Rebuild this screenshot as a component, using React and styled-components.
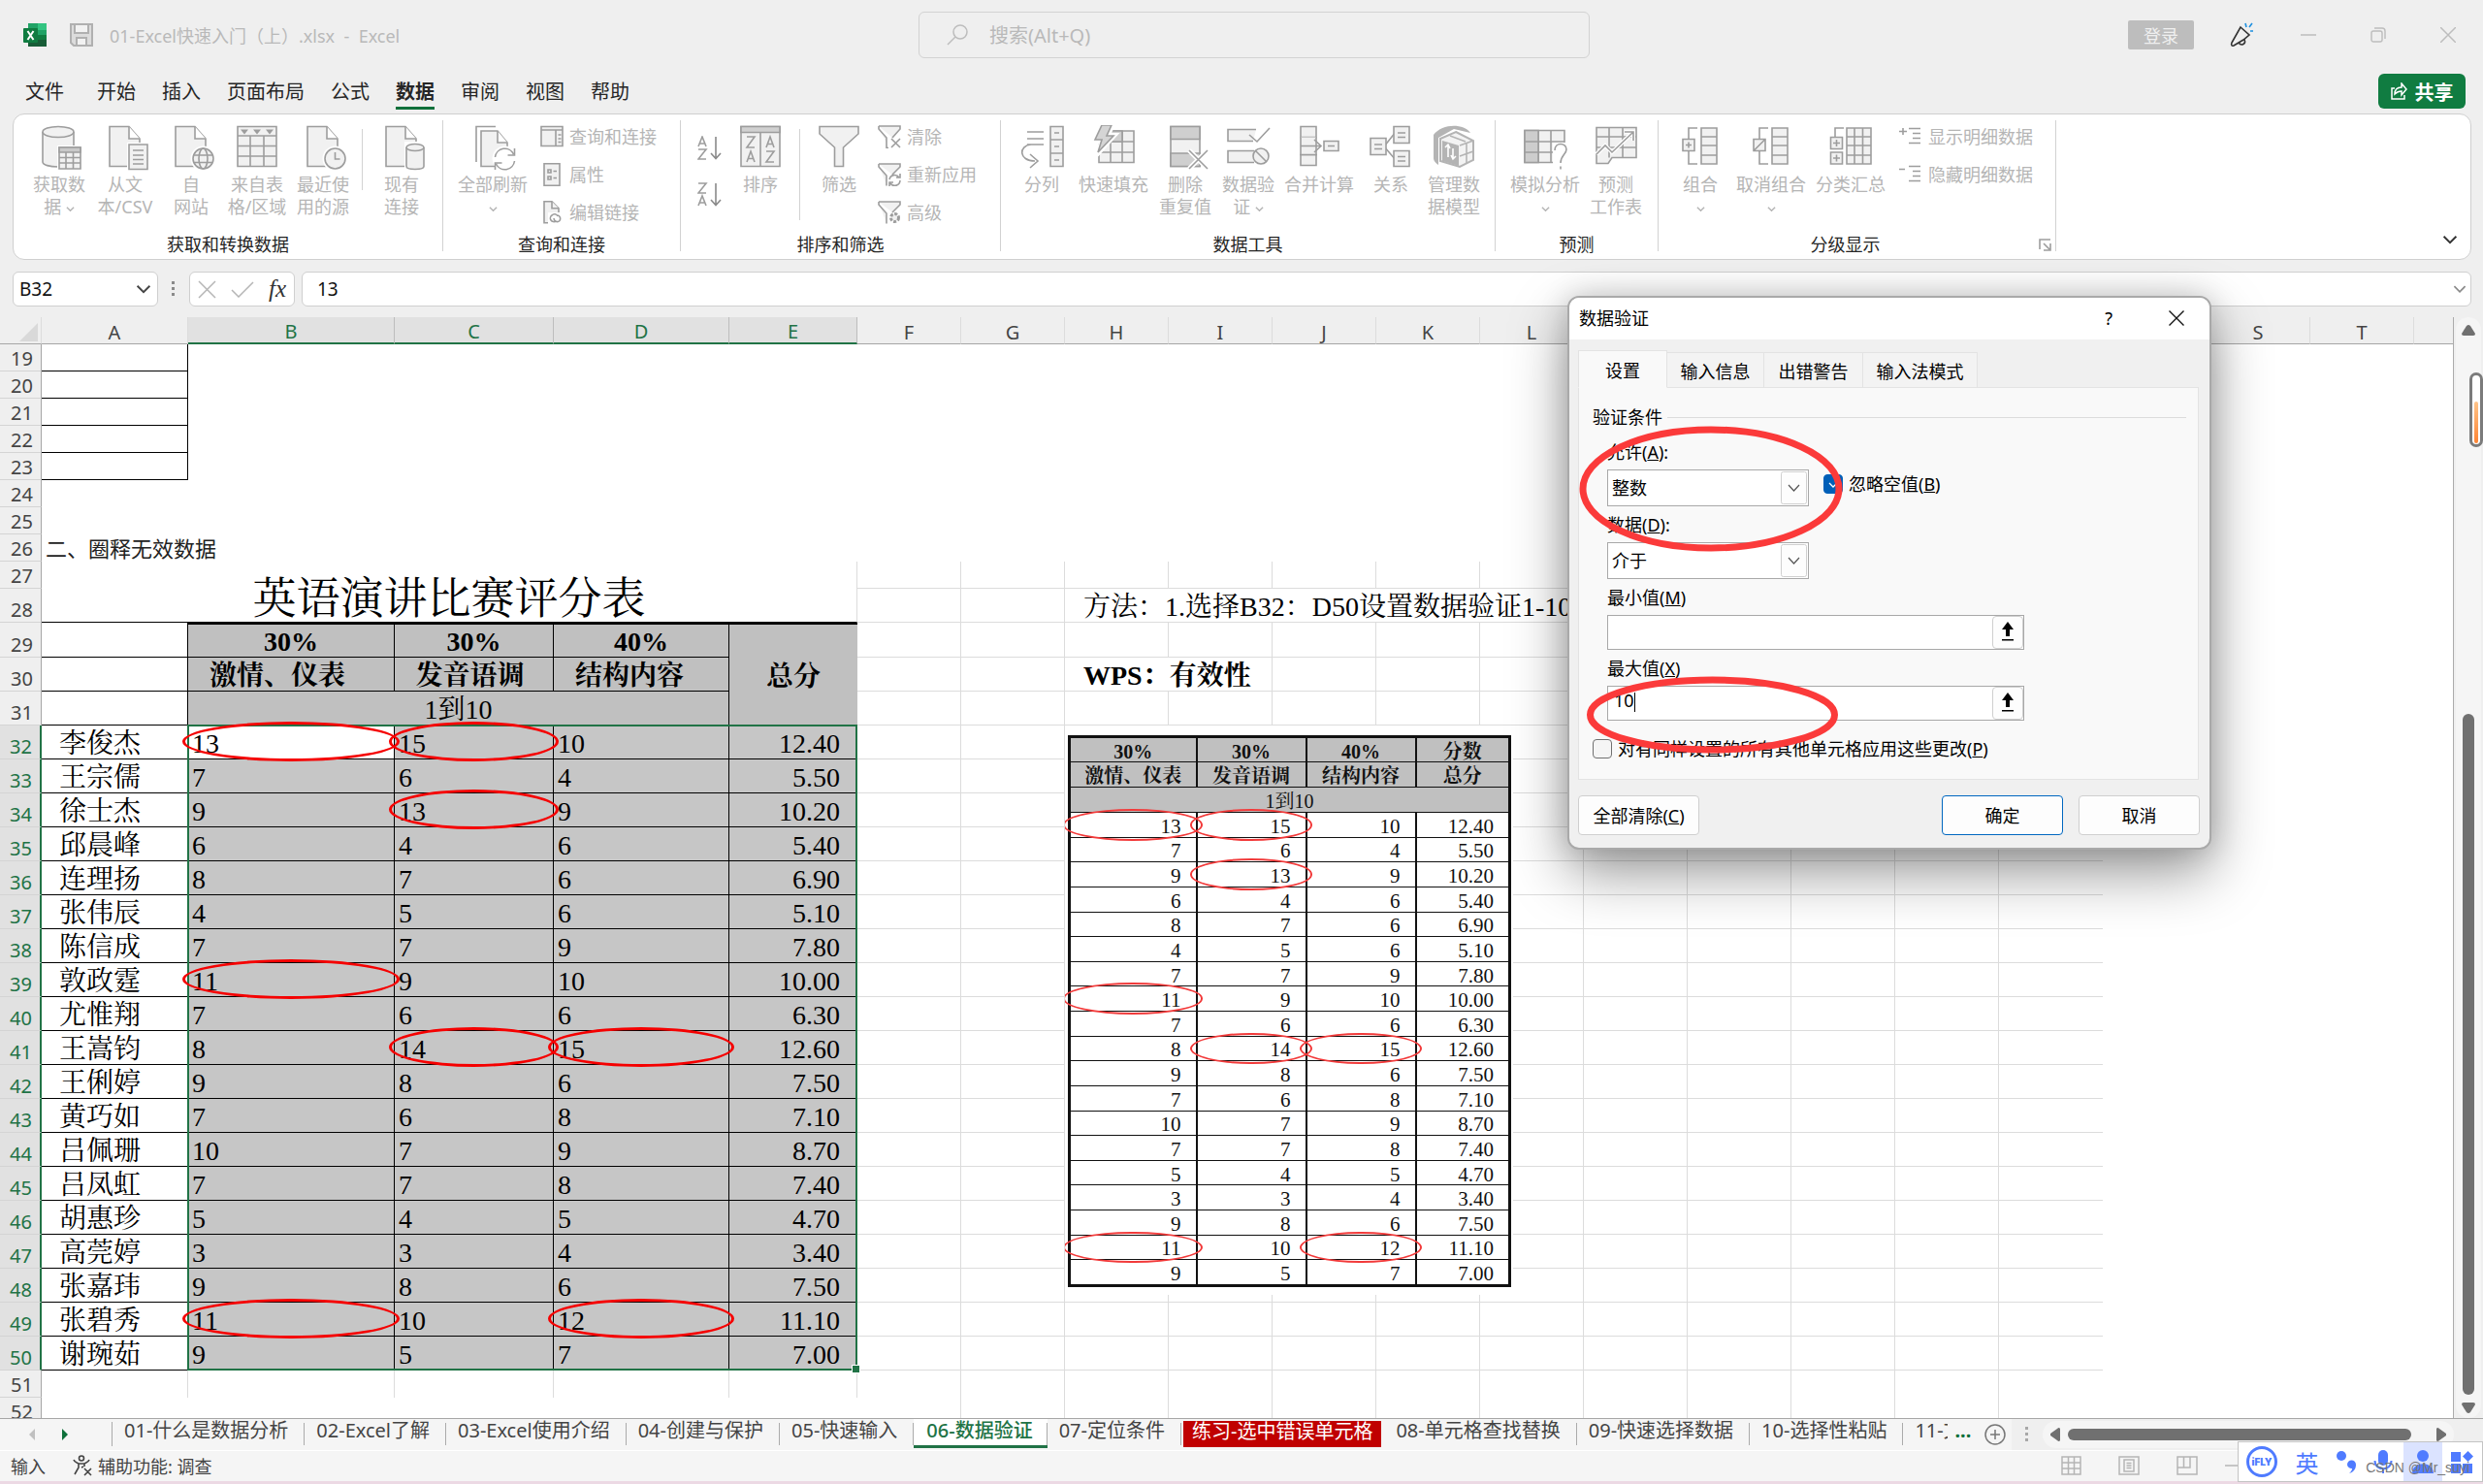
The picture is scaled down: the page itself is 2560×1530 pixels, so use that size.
import React from "react";
import styled, { createGlobalStyle, css } from "styled-components";

const UI = `"Noto Sans", "Noto Sans CJK SC", sans-serif`;
const SONG = `"Liberation Serif", "Noto Serif CJK SC", "Noto Sans CJK SC", serif`;

const Global = createGlobalStyle`
  * { box-sizing: border-box; }
  body { margin: 0; font-family: ${UI}; background: #efefef; }
  button, input, select { font-family: inherit; font-size: inherit; color: inherit; margin: 0; }
  button { background: none; border: 0; padding: 0; }
  svg { display: block; flex: none; }
`;

const App_ = styled.div`
  position: relative;
  display: flex;
  flex-direction: column;
  height: 100vh;
  overflow: hidden;
  background: #efefef;
  color: #262626;
`;

/* ---------- title bar ---------- */
const TitleBar = styled.header`
  display: grid;
  grid-template-columns: minmax(0, 923fr) 692px minmax(0, 893fr);
  align-items: center;
  height: 72px;
  padding: 0 28px 0 24px;
  color: #b9b9b9;
  font-size: 18px;
`;
const TitleLeft = styled.div`
  display: flex;
  align-items: center;
  gap: 24px;
`;
const FileName = styled.span`
  margin-left: -7px;
  white-space: pre;
`;
const Search = styled.label`
  display: flex;
  align-items: center;
  gap: 20px;
  height: 48px;
  padding: 0 28px;
  border: 1px solid #d2d2d2;
  border-radius: 6px;
  input {
    flex: 1;
    border: 0;
    background: none;
    outline: 0;
    font-size: 20px;
    &::placeholder { color: #b9b9b9; opacity: 1; }
  }
`;
const TitleRight = styled.div`
  display: flex;
  align-items: center;
  justify-content: flex-end;
  gap: 48px;
`;
const Login = styled.button`
  width: 68px;
  height: 30px;
  margin-right: -12px;
  border-radius: 2px;
  background: #bdbdbd;
  color: #efefef;
`;
const WinButtons = styled.div`
  display: flex;
  gap: 56px;
`;
const WinButton = styled.button`
  width: 16px;
  height: 24px;
  display: grid;
  place-items: center;
`;

/* ---------- menu ---------- */
const MenuBar = styled.nav`
  display: flex;
  align-items: center;
  justify-content: space-between;
  height: 44px;
  padding: 0 18px 0 26px;
  font-size: 20px;
`;
const MenuList = styled.div`
  display: flex;
  gap: 27px;
`;
const MenuItem = styled.button`
  height: 38px;
  padding-top: 4px;
  line-height: 31px;
  color: #262626;
  font-weight: ${(p) => (p.$on ? 700 : 400)};
  border-bottom: 3px solid ${(p) => (p.$on ? "#0f703b" : "transparent")};
  &:first-child { margin-right: 7px; }
`;
const Share = styled.button`
  display: flex;
  align-items: center;
  justify-content: center;
  gap: 8px;
  width: 90px;
  height: 36px;
  border-radius: 6px;
  background: #107c41;
  color: #fff;
  font-weight: 700;
`;

/* ---------- ribbon ---------- */
const Ribbon = styled.section`
  display: flex;
  height: 151px;
  margin: 1px 12px 0 13px;
  border: 1px solid #cfcfcf;
  border-radius: 12px;
  background: #fff;
`;
const Group = styled.div`
  position: relative;
  display: flex;
  flex-direction: column;
  margin: 6px 0 8px;
  width: ${(p) => p.$w}px;
  border-right: 1px solid #d2d2d2;
`;
const GroupBody = styled.div`
  display: flex;
  flex: 1 1 0;
  min-height: 0;
  padding-left: ${(p) => p.$pad}px;
  gap: ${(p) => p.$gap || 0}px;
`;
const GroupName = styled.div`
  height: 22px;
  margin-bottom: -4px;
  line-height: 22px;
  text-align: center;
  font-size: 18px;
  padding-right: ${(p) => p.$end || 0}px;
`;
const Big = styled.button`
  display: flex;
  flex-direction: column;
  align-items: center;
  gap: 2px;
  width: ${(p) => p.$w}px;
  height: 106px;
  padding-top: 5px;
  color: #b5b5b5;
  font-size: 18px;
  line-height: 23px;
  white-space: nowrap;
`;
const Rule = styled.span`
  width: 1px;
  height: ${(p) => p.$h}px;
  margin: 9px ${(p) => p.$m || 0}px 0;
  background: #d2d2d2;
`;
const SmallList = styled.div`
  display: flex;
  flex-direction: column;
  padding-left: ${(p) => p.$pad || 0}px;
`;
const Small = styled.button`
  display: flex;
  flex: none;
  align-items: center;
  gap: 6px;
  height: 39px;
  margin-top: ${(p) => p.$mt || 0}px;
  color: #b5b5b5;
  font-size: 18px;
  line-height: 24px;
  white-space: nowrap;
`;
const SortList = styled.div`
  display: flex;
  flex-direction: column;
  gap: 23px;
  padding-top: 16px;
`;
const Launcher = styled.button`
  position: absolute;
  right: 4px;
  bottom: 0;
`;
const Collapse = styled.button`
  align-self: flex-end;
  margin: 0 13px 7px auto;
`;

/* ---------- formula bar ---------- */
const FormulaBar = styled.section`
  display: flex;
  align-items: center;
  height: 36px;
  margin: 12px 12px 11px 13px;
  font-size: 19px;
`;
const BarBox = styled.div`
  display: flex;
  align-items: center;
  justify-content: space-between;
  width: ${(p) => (p.$w ? p.$w + "px" : "auto")};
  flex: ${(p) => (p.$w ? "none" : 1)};
  height: 36px;
  padding: 0 6px;
  border: 1px solid #cfcfcf;
  border-radius: 6px;
  background: #fff;
  input {
    flex: 1;
    min-width: 0;
    border: 0;
    outline: 0;
    padding: 0;
    background: none;
    color: #111;
  }
`;
const FormulaInput = styled(BarBox)`
  margin-left: 7px;
  padding: 0 4px 0 15px;
`;
const FxBox = styled(BarBox)`
  padding: 0 8px;
`;
const Dots = styled.span`
  width: 32px;
  display: grid;
  place-items: center;
`;
const Fx = styled.span`
  font-family: "Liberation Serif", serif;
  font-style: italic;
  font-size: 25px;
  line-height: 28px;
  color: #333;
`;

/* ---------- sheet ---------- */
const SheetArea = styled.main`
  display: flex;
  flex: 1;
  min-height: 0;
`;
const SheetView = styled.div`
  flex: 1;
  min-width: 0;
  overflow: hidden;
  background: linear-gradient(#efefef 27px, #fff 27px);
  border-right: 1px solid #ababab;
`;
const Grid = styled.table`
  table-layout: fixed;
  border-collapse: separate;
  border-spacing: 0;
  width: 100%;
  min-width: 2530px;
`;
const ColHead = styled.th`
  height: 28px;
  padding: 4px 0 0;
  font-size: 20px;
  font-weight: 400;
  line-height: 22px;
  background: ${(p) => (p.$on ? "#e1e1e1" : "#efefef")};
  color: ${(p) => (p.$on ? "#217346" : "#444")};
  border-right: 1px solid ${(p) => (p.$last ? "#efefef" : p.$on ? "#bdbdbd" : "#dcdcdc")};
  border-bottom: ${(p) => (p.$on ? "2px solid #217346" : "1px solid #a6a6a6")};
`;
const RowHead = styled.th`
  height: ${(p) => p.$h}px;
  padding: 0 8px 1px 0;
  vertical-align: bottom;
  text-align: right;
  font-size: 20px;
  font-weight: 400;
  line-height: 23px;
  background: ${(p) => (p.$on ? "#e1e1e1" : "#efefef")};
  color: ${(p) => (p.$on ? "#217346" : "#444")};
  border-bottom: 1px solid #d4d4d4;
  border-right: ${(p) => (p.$on ? "2px solid #217346" : "1px solid #a6a6a6")};
`;
const line = (v) => (v ? `1px solid ${v}` : "0");
const Cell = styled.td`
  position: relative;
  padding: 3px ${(p) => p.$pr || 0}px 0 ${(p) => p.$pl || 0}px;
  font-family: ${SONG};
  font-size: 28px;
  line-height: 30px;
  color: #000;
  white-space: nowrap;
  vertical-align: middle;
  text-align: ${(p) => p.$align || "left"};
  font-weight: ${(p) => (p.$bold ? 700 : 400)};
  background: ${(p) => p.$bg || "transparent"};
  border-right: ${(p) => line(p.$r)};
  border-bottom: ${(p) => line(p.$b)};
  border-top: ${(p) => (p.$thick ? "2px solid #000" : "0")};
`;
const TitleCell = styled(Cell)`
  padding-top: 16px;
  font-size: 45px;
  line-height: 46px;
`;
const NoteCell = styled(Cell)`
  padding: 0 0 0 4px;
  font-family: ${UI};
  font-size: 22px;
  line-height: 26px;
  color: #222;
`;
const Corner = styled.svg`
  margin-left: auto;
`;
const Invalid = styled.span`
  position: absolute;
  z-index: 2;
  inset: -4px -6px -3px -6px;
  border: 3px solid #f50000;
  border-radius: 50%;
`;
const Selection = styled.span`
  position: absolute;
  z-index: 1;
  left: -1px;
  top: -1px;
  width: 691px;
  height: 666px;
  border: 2px solid #217346;
  &::after {
    content: "";
    position: absolute;
    right: -4px;
    bottom: -4px;
    width: 7px;
    height: 7px;
    background: #217346;
    outline: 1px solid #fff;
  }
`;

/* floating picture on the sheet */
const Picture = styled.div`
  position: absolute;
  z-index: 1;
  left: 0;
  top: 0;
  width: 462px;
  height: 587px;
  padding: 10px 1px 0 3px;
  overflow: hidden;
  background: #fff;
`;
const Mini = styled.table`
  position: relative;
  table-layout: fixed;
  border-collapse: collapse;
  width: 457px;
  height: 569px;
  border: 3px solid #111;
  font-size: 21px;
  line-height: 20px;
  td, th {
    position: relative;
    padding: 3px 15px 0 0;
    border: 2px solid #111;
    border-width: 1px 2px;
    text-align: right;
    font-weight: 400;
    line-height: 20px;
    font-size: 21px;
    color: #111;
  }
  th {
    height: 26px;
    padding-right: 0;
    background: #c0c0c0;
    text-align: center;
    font-weight: 700;
    font-size: 20px;
  }
  th[colspan] { font-weight: 400; }
`;
const MiniInvalid = styled(Invalid)`
  inset: -4px -7px -4px -8px;
  border-width: 2px;
  border-color: #f23a3a;
`;

/* ---------- scroll bars ---------- */
const VScroll = styled.aside`
  display: flex;
  flex-direction: column;
  align-items: center;
  width: 26px;
  margin: 0 2px 0 2px;
  padding: 8px 0 5px;
  border-radius: 13px;
  background: #f5f5f5;
`;
const VThumb = styled.span`
  width: 12px;
  flex: 703;
  margin: 0 0 8px;
  border-radius: 6px;
  background: #707070;
`;
const VGap = styled.span`
  flex: 390;
`;
const Gauge = styled.div`
  position: absolute;
  right: 0;
  top: 384px;
  width: 14px;
  height: 77px;
  padding: 27px 2px 1px;
  border: 3px solid #7b7b7b;
  border-radius: 7px;
  background: #fff;
  &::after {
    content: "";
    display: block;
    height: 43px;
    border-radius: 3px;
    background: linear-gradient(#ffc489, #fd8433);
  }
`;

/* ---------- sheet tabs ---------- */
const TabBar = styled.nav`
  display: flex;
  height: 34px;
  border-top: 1px solid #a6a6a6;
  border-bottom: 1px solid #fff;
  background: #f5f5f5;
  font-size: 20px;
`;
const TabNav = styled.div`
  display: flex;
  align-items: center;
  gap: 28px;
  width: 116px;
  padding: 0 0 0 30px;
  border-right: 1px solid #ababab;
  border-image: linear-gradient(#f5f5f5 4px, #ababab 4px 27px, #f5f5f5 27px) 1;
`;
const Tabs = styled.div`
  display: flex;
  flex: 1;
  min-width: 0;
  overflow: hidden;
`;
const Tab = styled.button`
  position: relative;
  flex: none;
  display: flex;
  align-items: flex-start;
  height: 29px;
  padding: 0 17px 0 12px;
  line-height: 24px;
  color: #444;
  white-space: nowrap;
  &::after {
    content: "";
    position: absolute;
    right: 0;
    top: 4px;
    width: 1px;
    height: 23px;
    background: #ababab;
  }
  ${(p) => p.$on && css`
    height: 30px;
    padding: 0 15px 0 13px;
    background: #fff;
    color: #217346;
    font-weight: 500;
    border-bottom: 3px solid #217346;
  `}
  ${(p) => p.$red && css`
    height: 27px;
    margin: 2px 3px 0 2px;
    padding: 0 9px;
    line-height: 22px;
    background: #c00000;
    color: #fff;
    &::after { display: none; }
  `}
  ${(p) => p.$cut && css`
    width: 46px;
    padding-right: 0;
    overflow: hidden;
    &::after { display: none; }
  `}
`;
const TabMore = styled.span`
  flex: none;
  margin-left: 7px;
  color: #0f703b;
  font-weight: 700;
  line-height: 24px;
`;
const AddTab = styled.button`
  width: 34px;
  display: grid;
  place-items: center;
`;
const HZone = styled.div`
  display: flex;
  align-items: center;
  width: 486px;
  background: #efefef;
`;
const HScroll = styled.div`
  display: flex;
  align-items: center;
  gap: 8px;
  width: 424px;
  height: 28px;
  padding: 0 8px;
  border-radius: 14px;
  background: #f5f5f5;
`;
const HThumb = styled.span`
  width: 354px;
  height: 12px;
  margin-right: 18px;
  border-radius: 6px;
  background: #707070;
`;

/* ---------- status bar ---------- */
const StatusBar = styled.footer`
  display: flex;
  align-items: center;
  gap: 28px;
  height: 34px;
  padding: 0 0 2px 11px;
  border-bottom: 3px solid #ecd9e4;
  background: #f5f5f5;
  color: #444;
  font-size: 18px;
`;
const Access = styled.button`
  display: flex;
  align-items: center;
  gap: 6px;
`;
const Views = styled.div`
  display: flex;
  align-items: center;
  gap: 38px;
  margin-left: auto;
  padding-right: 253px;
  > :last-child { margin-left: -10px; }
`;
const Ime = styled.div`
  position: absolute;
  right: 0;
  bottom: 2px;
  display: flex;
  align-items: center;
  width: 253px;
  height: 42px;
  border: 1px solid #c4c4c4;
  background: #fff;
  color: #4f7bff;
  font-size: 24px;
  font-weight: 700;
`;
const ImeKey = styled.button`
  display: grid;
  place-items: center;
  width: ${(p) => p.$w}px;
  height: 40px;
  background: ${(p) => (p.$on ? "#dbe3ff" : "transparent")};
`;
const Watermark = styled.span`
  position: absolute;
  right: 13px;
  bottom: 4px;
  font: 400 14px/20px "Liberation Sans", sans-serif;
  color: #777;
`;

/* ---------- dialog ---------- */
const Dialog = styled.section`
  position: absolute;
  z-index: 5;
  left: 1616px;
  top: 305px;
  width: 664px;
  border: 2px solid #a9a9a9;
  border-radius: 12px;
  background: #f0f0f0;
  color: #000;
  font-size: 18px;
  line-height: 24px;
  box-shadow: 0 24px 60px rgba(0, 0, 0, 0.4), 0 0 30px rgba(0, 0, 0, 0.16);
`;
const DialogTitle = styled.header`
  display: flex;
  align-items: center;
  height: 43px;
  padding: 0 26px 2px 10px;
  border-radius: 10px 10px 0 0;
  background: #fff;
  gap: 58px;
  h2 {
    flex: 1;
    margin: 0;
    font-size: 18px;
    font-weight: 400;
  }
`;
const DialogTabs = styled.div`
  position: relative;
  z-index: 1;
  display: flex;
  align-items: flex-end;
  margin: 11px 9px -1px;
`;
const DialogTab = styled.button`
  width: ${(p) => p.$w}px;
  height: ${(p) => (p.$on ? 39 : 37)}px;
  border: 1px solid #e3e3e3;
  border-left-width: ${(p) => (p.$on ? 1 : 0)}px;
  border-bottom-color: ${(p) => (p.$on ? "#f9f9f9" : "#e3e3e3")};
  background: ${(p) => (p.$on ? "#f9f9f9" : "#f3f3f3")};
`;
const Panel = styled.div`
  margin: 0 11px 0 9px;
  padding: 18px 12px 16px 14px;
  border: 1px solid #e3e3e3;
  background: #f9f9f9;
`;
const Legend = styled.div`
  display: flex;
  align-items: center;
  gap: 5px;
  margin-bottom: 12px;
  &::after {
    content: "";
    flex: 1;
    height: 1px;
    background: #dcdcdc;
  }
`;
const Fields = styled.div`
  display: flex;
  flex-direction: column;
  gap: 7px;
  padding-left: 15px;
`;
const Field = styled.div`
  display: grid;
  grid-template-columns: ${(p) => p.$w}px 1fr;
  column-gap: 15px;
  row-gap: 6px;
  > label:first-child { grid-column: 1 / -1; }
`;
const Combo = styled.span`
  position: relative;
  display: block;
  select {
    width: 100%;
    height: 38px;
    padding: 0 32px 0 4px;
    border: 1px solid #a8a8a8;
    border-radius: 0;
    background: #fff;
    appearance: none;
  }
  svg {
    position: absolute;
    right: 2px;
    top: 2px;
    pointer-events: none;
  }
`;
const RefBox = styled.span`
  position: relative;
  display: flex;
  height: 36px;
  border: 1px solid #a8a8a8;
  background: #fff;
  input {
    flex: 1;
    min-width: 0;
    border: 0;
    outline: 0;
    padding: 0 0 6px 6px;
    background: none;
  }
  button {
    width: 32px;
    border: 1px solid #cfcfcf;
    border-radius: 4px;
    display: grid;
    place-items: center;
    background: #fdfdfd;
  }
`;
const Caret = styled.i`
  position: absolute;
  left: 27px;
  top: 6px;
  width: 1px;
  height: 20px;
  background: #000;
`;
const Check = styled.label`
  display: flex;
  align-items: center;
  gap: 6px;
  height: 30px;
  margin-top: ${(p) => p.$mt || 0}px;
  white-space: nowrap;
  input {
    appearance: none;
    width: 20px;
    height: 20px;
    border: 1px solid #707070;
    border-radius: 4px;
    background: #f5f5f5;
  }
  input:checked {
    border-color: #005fb8;
    background: #005fb8;
  }
`;
const Tick = styled.svg`
  position: absolute;
  margin: 0 0 0 4px;
`;
const DialogFoot = styled.footer`
  display: flex;
  gap: 16px;
  padding: 16px 10px 13px 9px;
`;
const DialogButton = styled.button`
  width: 125px;
  height: 41px;
  padding-bottom: 2px;
  border: 1px solid ${(p) => (p.$primary ? "#0067c0" : "#cfcfcf")};
  border-radius: 4px;
  background: #fdfdfd;
  margin-left: ${(p) => (p.$primary ? "auto" : 0)};
`;
const Marks = styled.svg`
  position: absolute;
  left: 0;
  top: 120px;
  pointer-events: none;
`;

/* ---------- icons ---------- */
const G = { fill: "#f1f1f1", stroke: "#9d9d9d", strokeWidth: 1.6 };
const N = { fill: "none", stroke: "#9d9d9d", strokeWidth: 1.6 };
const Ico = ({ w = 48, h = 48, children }) => (
  <svg width={w} height={h} viewBox={`0 0 ${w} ${h}`} {...G}>{children}</svg>
);
const InlineSvg = styled.svg`
  display: inline-block;
`;
const Chev = ({ w = 9, c = "#b5b5b5", sw = 1.6 }) => (
  <InlineSvg width={w} height={w} viewBox="0 0 10 10" fill="none" stroke={c} strokeWidth={sw}>
    <path d="M1 3l4 4 4-4" />
  </InlineSvg>
);
const Doc = () => (
  <>
    <path d="M8 1.5h20L39 14v28.500H8z" />
    <path d="M28 1.500V14h11" fill="#fff" />
  </>
);
const icons = {
  db: (
    <Ico>
      <path d="M7 7v31c0 3 7 5 16 5s16-2 16-5V7" />
      <ellipse cx="23" cy="7" rx="16" ry="5.500" />
      <rect x="22" y="21" width="26" height="26" fill="#fff" stroke="none" />
      <path d="M24 23h22v22H24z" /><path d="M24 23h22v5H24z" fill="#c9c9c9" />
      <path d="M24 33.500h22M24 39h22M31 28v17M38.500 28v17" {...N} />
    </Ico>
  ),
  csv: (
    <Ico><Doc /><rect x="26" y="18" width="22" height="29" fill="#fff" stroke="none" /><path d="M28 20h19v25.500H28zM32 26h11M32 31h11M32 35.500h11M32 40h11" /></Ico>
  ),
  web: (
    <Ico><Doc /><circle cx="36.500" cy="34.500" r="13" fill="#fff" stroke="none" /><circle cx="36.500" cy="34.500" r="10.500" /><ellipse cx="36.500" cy="34.500" rx="4.500" ry="10.500" {...N} /><path d="M27 31h19M27 38.500h19" {...N} /></Ico>
  ),
  table: (
    <Ico><path d="M4 1.500h40v41H4zM4 11h40M4 21.500h40M4 32h40M17 11v31.500M31 11v31.500" /><path d="M7 4.500h8l-4 5zM20 4.500h8l-4 5zM33 4.500h8l-4 5z" fill="#9d9d9d" stroke="none" /></Ico>
  ),
  recent: (
    <Ico><Doc /><circle cx="36.500" cy="34.500" r="13" fill="#fff" stroke="none" /><circle cx="36.500" cy="34.500" r="10.500" /><path d="M36.500 28v7h5" {...N} /></Ico>
  ),
  existing: (
    <Ico><Doc /><rect x="27" y="17" width="21" height="30" fill="#fff" stroke="none" /><path d="M29 23v19.500c0 2 4 3 9 3s9-1 9-3V23" /><ellipse cx="38" cy="23" rx="9" ry="3.500" /></Ico>
  ),
  refresh: (
    <Ico><path d="M7 38V1.500h20" {...N} /><path d="M12 6h17l10 12v24.500H12z" /><path d="M29 6v12h10" fill="#fff" /><circle cx="36.500" cy="34.500" r="13" fill="#fff" stroke="none" /><path d="M26.500 33a10 10 0 0 1 19-3M46.500 24v7h-7M46.500 37a10 10 0 0 1-19 3M26.500 46v-7h7" {...N} /></Ico>
  ),
  sort: (
    <Ico><path d="M4 1.500h40v41H4z" /><path d="M4 1.500h40v6H4z" fill="#d0d0d0" /><path d="M24 7.500v35M10 12h8l-8 11h8M30 23l4-11 4 11M31 19.500h6M10 38l4-11 4 11M11 34.500h6M30 27h8l-8 11h8" {...N} /></Ico>
  ),
  filter: <Ico><path d="M4 1.500h40V9L28.500 23v19.500h-9V23L4 9z" /></Ico>,
  split: (
    <Ico><path d="M33 1.500h13v41H33zM33 15h13M33 29h13M37 8h5M37 22h5M37 36h5" /><path d="M9 7h17M9 14h17M9 20h17M13 20C0 21 0 37 17 37M12 30l8 7-8 7" {...N} /></Ico>
  ),
  flash: (
    <Ico><path d="M9 38.500V6h36v32.500zM9 17h36M9 28h36M21 6v32.500M33 6v32.500" /><path d="M20 6h13v11H20z" fill="#cfcfcf" /><path d="M12-1h12l-5 11h7L7 31l4-14H4z" fill="#d5d5d5" stroke="#fff" strokeWidth="4" /><path d="M12 0h10l-5 11h7L8 28l4-13H5z" fill="#d5d5d5" /></Ico>
  ),
  dedupe: (
    <Ico><path d="M9 1.500h30v41H9z" /><path d="M9 1.500h30v13H9zM9 29h30v13.500H9z" fill="#cfcfcf" /><path d="M28 26l19 19M47 26L28 45" stroke="#fff" strokeWidth="5" /><path d="M28 26l19 19M47 26L28 45" {...N} /></Ico>
  ),
  validate: (
    <Ico><path d="M32 4.500H3v12h26M30 26.500H3v12h27" /><path d="M25 10l8 7L46 3" {...N} /><circle cx="37" cy="32" r="8" /><path d="M31.500 26.500l11 11" {...N} /></Ico>
  ),
  merge: (
    <Ico><path d="M5 1.500h16v11H5zM5 30.500h16v11H5zM29 16.500h15v10H29zM33 21.500h7" /><path d="M5 12.500v18h16v-18" /><path d="M5 21.500h20M19 15l7 6.500-7 6.500" {...N} /></Ico>
  ),
  relate: (
    <Ico><path d="M17 22L29 7M17 22l12 14" {...N} /><path d="M3 13.500h16v17H3zM27 1.500h16v17H27zM27 26.500h16v16H27zM7 20h8M7 24.500h8M31 8h8M31 12.500h8M31 32.500h8M31 37h8" /></Ico>
  ),
  model: (
    <Ico><path d="M3 10C12-2 34-2 41 8L24 4 8 13v28C4 38 3 36 3 34z" fill="#b4b4b4" stroke="none" /><path d="M26 7l18 9v20l-14 7-20-6V14z" fill="#f3f3f3" stroke="#b4b4b4" strokeWidth="2" /><path d="M12 16l17 5v21l-17-5z" fill="#b4b4b4" stroke="none" /><path d="M30 21l14-5M30 32l14-5M37 18v22M20 11l16 6" {...N} stroke="#b4b4b4" /><path d="M15 23l3-3 2 4M18 20v13M23 24v11M21 31l2 4 3-3" stroke="#fff" fill="none" /></Ico>
  ),
  whatif: (
    <Ico><path d="M3 5.500h41v33H3zM3 17h41M3 28h41M17 5.500v33M30 5.500v33" /><path d="M3 5.500h14v33H3z" fill="#cdcdcd" /><path d="M3 17h14M3 28h14" /><path d="M32 18h16v30H32z" fill="#fff" stroke="none" /><path d="M34 26c0-9 12-8 12-1 0 5-6 6-6 14M40 42.500v3" {...N} /></Ico>
  ),
  forecast: (
    <Ico><path d="M4 2.500h41v31H20l-4 6H4zM4 12h41M4 23h41M17 2.500v31M31 2.500v31" /><path d="M4 30l9-9 7 7L41 8M33 7h9v9" stroke="#fff" strokeWidth="4" fill="none" /><path d="M4 30l9-9 7 7L41 8M33 7h9v9" {...N} /></Ico>
  ),
  group: (
    <Ico><path d="M25 3h16v37H25zM25 12h16M25 21h16M25 31h16" /><path d="M21 3h-9v11M12 27v13h9" {...N} /><path d="M6 14.500h12v12H6zM9 20.500h6M12 17.500v6" /></Ico>
  ),
  ungroup: (
    <Ico><path d="M25 3h16v37H25zM25 12h16M25 21h16M25 31h16" /><path d="M21 3h-9v11M12 27v13h9" {...N} /><path d="M6 14.500h12v12H6zM6 26.500l12-12" /></Ico>
  ),
  subtotal: (
    <Ico><path d="M20 3h25v37H20zM20 12h25M20 21h25M20 31h25M28 3v37M36.500 3v37" /><path d="M17 3H8v9" {...N} /><path d="M3.500 12.500h12v12h-12zM3.500 28h12v12h-12zM6 18.500h7M9.500 15v7M6 34h7M9.500 30.500v7" /></Ico>
  ),
  queries: <Ico w={24} h={24}><path d="M1 1.500h22v20H1zM1 5h22M16 5v16.500M18.500 10h3M18.500 14h3M18.500 17.500h3" /></Ico>,
  props: <Ico w={24} h={24}><path d="M4 .8h16v22.400H4zM8 7h3v3H8zM8 14h3v3H8zM13.500 8.500H17M13.500 15.500H17" /></Ico>,
  links: <Ico w={24} h={24}><path d="M4 .8h8l7 7v15H4z" /><path d="M12 .8v7h7" /><path d="M8 12h16v12H8z" fill="#fff" stroke="none" /><path d="M16 21a3.500 3.500 0 0 1-4-6 3.500 3.500 0 0 1 6 1M14 18a3.500 3.500 0 0 0 6 2.500 3.500 3.500 0 0 0-2-5.500" {...N} /></Ico>,
  clear: <Ico w={24} h={24}><path d="M1 1h22v3l-8 9M11 23.500h-2V13L1 4V1" /><path d="M14 14l9 9M23 14l-9 9" {...N} /></Ico>,
  reapply: <Ico w={24} h={24}><path d="M1 1h22v3l-8 8M9 23.500V13L1 4V1" /><path d="M12 17a5.500 5.500 0 0 1 10-2M23 11v4h-4M23 18a5.500 5.500 0 0 1-10 3M12 24v-4h4" {...N} /></Ico>,
  advanced: <Ico w={24} h={24}><path d="M1 1h22v3l-8 8M9 23.500V13L1 4V1" /><circle cx="17.500" cy="17.500" r="4" strokeWidth="3" strokeDasharray="3 1.500" /></Ico>,
  show: <Ico w={24} h={24}><path d="M0 6.500h8M4 3v7M10 3.500h12M14 8.500h8M14 13.500h8M10 18.500h12" {...N} /></Ico>,
  hide: <Ico w={24} h={24}><path d="M0 6.500h6M10 3.500h12M14 8.500h8M14 13.500h8M10 18.500h12" {...N} /></Ico>,
  az: <Ico w={25} h={25}><path d="M1 11l4-10 4 10M2 8h6M1 14h8l-8 10h8" {...N} /><path d="M19 1v22M14 18l5 5.500 5-5.500" {...N} stroke="#8a8a8a" /></Ico>,
  za: <Ico w={25} h={25}><path d="M1 1h8L1 11h8M1 24l4-10 4 10M2 21h6" {...N} /><path d="M19 1v22M14 18l5 5.500 5-5.500" {...N} stroke="#8a8a8a" /></Ico>,
};

const BigButton = ({ icon, w, a, b, drop }) => (
  <Big $w={w}>
    {icons[icon]}
    <span>
      {a}
      {(b || drop) && <br />}
      {b}
      {drop && <> <Chev /></>}
    </span>
  </Big>
);
const SmallButton = ({ icon, children, mt }) => (
  <Small $mt={mt}>{icons[icon]}{children}</Small>
);

/* ---------- data ---------- */
const COLS = "ABCDEFGHIJKLMNOPQRST".split("");
const WIDTHS = [43, 151, 213, 164, 181, 132, ...Array(15).fill(107)];
const SCORES = [
  ["李俊杰", "13", "15", "10", "12.40"], ["王宗儒", "7", "6", "4", "5.50"],
  ["徐士杰", "9", "13", "9", "10.20"], ["邱晨峰", "6", "4", "6", "5.40"],
  ["连理扬", "8", "7", "6", "6.90"], ["张伟辰", "4", "5", "6", "5.10"],
  ["陈信成", "7", "7", "9", "7.80"], ["敦政霆", "11", "9", "10", "10.00"],
  ["尤惟翔", "7", "6", "6", "6.30"], ["王嵩钧", "8", "14", "15", "12.60"],
  ["王俐婷", "9", "8", "6", "7.50"], ["黄巧如", "7", "6", "8", "7.10"],
  ["吕佩珊", "10", "7", "9", "8.70"], ["吕凤虹", "7", "7", "8", "7.40"],
  ["胡惠珍", "5", "4", "5", "4.70"], ["高莞婷", "3", "3", "4", "3.40"],
  ["张嘉玮", "9", "8", "6", "7.50"], ["张碧秀", "11", "10", "12", "11.10"],
  ["谢琬茹", "9", "5", "7", "7.00"],
];
const MENU = ["文件", "开始", "插入", "页面布局", "公式", "数据", "审阅", "视图", "帮助"];
const TABS = ["01-什么是数据分析", "02-Excel了解", "03-Excel使用介绍", "04-创建与保护", "05-快速输入", "06-数据验证", "07-定位条件", "练习-选中错误单元格", "08-单元格查找替换", "09-快速选择数据", "10-选择性粘贴", "11-文"];
const LINE = "#dcdcdc";
const INK = "#000";
const HEAD = "#c0c0c0";
const SEL = "#c6c6c6";

const MiniSheet = () => (
  <Picture>
    <Mini>
      <colgroup><col width="131" /><col width="113" /><col width="113" /><col /></colgroup>
      <thead>
        <tr><th>30%</th><th>30%</th><th>40%</th><th>分数</th></tr>
        <tr><th>激情、仪表</th><th>发音语调</th><th>结构内容</th><th>总分</th></tr>
        <tr><th colSpan={4}>1到10</th></tr>
      </thead>
      <tbody>
        {SCORES.map((r) => (
          <tr key={r[0]}>
            {r.slice(1).map((v, i) => (
              <td key={i}>{v}{i < 3 && +v > 10 && <MiniInvalid />}</td>
            ))}
          </tr>
        ))}
      </tbody>
    </Mini>
  </Picture>
);

/* columns F to U of one row */
const Rest = ({ row }) => {
  const cells = [];
  for (let i = 5; i <= 20; i++) {
    const name = COLS[i] || "U";
    const lined = row >= 27;
    const spill = (row === 28 && "HIJKL".includes(name)) || (row === 30 && name === "H");
    const r = lined && i <= 15 && !spill ? LINE : null;
    const b = lined && row < 51 && i <= 16 ? LINE : null;
    cells.push(
      <Cell key={name} $r={r} $b={b} $pl={name === "H" ? 19 : 0} $bold={row === 30}>
        {name === "H" && row === 28 && "方法：1.选择B32：D50设置数据验证1-10"}
        {name === "H" && row === 30 && "WPS：有效性"}
        {name === "H" && row === 32 && <MiniSheet />}
      </Cell>
    );
  }
  return cells;
};

const Lead = ({ row }) => {
  if (row <= 23) return <><Cell $r={INK} $b={INK} /><Cell /><Cell /><Cell /><Cell /></>;
  if (row === 26) return <><NoteCell>二、圈释无效数据</NoteCell><Cell /><Cell /><Cell /><Cell /></>;
  if (row === 27) return <TitleCell colSpan={5} rowSpan={2} $align="center" $r={LINE} $b={INK}>英语演讲比赛评分表</TitleCell>;
  if (row === 28) return null;
  if (row === 29)
    return (
      <>
        <Cell $r={INK} $b={INK} />
        {["30%", "30%", "40%"].map((t, i) => <Cell key={i} $thick $bold $align="center" $bg={HEAD} $r={INK} $b={INK}>{t}</Cell>)}
        <Cell rowSpan={3} $thick $bold $align="center" $bg={HEAD}>总分</Cell>
      </>
    );
  if (row === 30)
    return (
      <>
        <Cell $r={INK} $b={INK} />
        <Cell $bold $align="center" $pr={28} $bg={HEAD} $r={INK} $b={INK}>激情、仪表</Cell>
        <Cell $bold $align="center" $pr={8} $bg={HEAD} $r={INK} $b={INK}>发音语调</Cell>
        <Cell $bold $align="center" $pr={24} $bg={HEAD} $r={INK} $b={INK}>结构内容</Cell>
      </>
    );
  if (row === 31) return <><Cell $r={INK} $b={INK} /><Cell colSpan={3} $align="center" $bg={HEAD} $r={INK}>1到10</Cell></>;
  if (row >= 32 && row <= 50) {
    const s = SCORES[row - 32];
    return (
      <>
        <Cell $pl={18} $r={INK} $b={INK}>{s[0]}</Cell>
        {s.slice(1, 4).map((v, i) => (
          <Cell key={i} $pl={4} $bg={row === 32 && i === 0 ? "#fff" : SEL} $r={INK} $b={INK}>
            {v}
            {+v > 10 && <Invalid />}
            {row === 32 && i === 0 && <Selection />}
          </Cell>
        ))}
        <Cell $align="right" $pr={18} $bg={SEL} $b={INK}>{s[4]}</Cell>
      </>
    );
  }
  const c = row === 51 ? LINE : null;
  return <><Cell $r={c} /><Cell $r={c} /><Cell $r={c} /><Cell $r={c} /><Cell $r={c} /></>;
};

const Sheet = () => (
  <Grid>
    <colgroup>{WIDTHS.map((w, i) => <col key={i} width={w} />)}<col /></colgroup>
    <thead>
      <tr>
        <ColHead><Corner width="22" height="21"><path d="M19 1v19H0z" fill="#d9d9d9" /></Corner></ColHead>
        {COLS.map((c) => <ColHead key={c} $on={"BCDE".includes(c)}>{c}</ColHead>)}
        <ColHead $last />
      </tr>
    </thead>
    <tbody>
      {Array.from({ length: 34 }, (_, i) => i + 19).map((row) => (
        <tr key={row}>
          <RowHead $h={row >= 28 && row <= 50 ? 35 : 28} $on={row >= 32 && row <= 50}>{row}</RowHead>
          <Lead row={row} />
          <Rest row={row} />
        </tr>
      ))}
    </tbody>
  </Grid>
);

const ComboBox = ({ id, value }) => (
  <Combo>
    <select id={id} defaultValue={value}><option>{value}</option></select>
    <svg width="27" height="34" fill="none"><rect x=".5" y=".5" width="26" height="33" rx="2" stroke="#cfcfcf" fill="#fdfdfd" /><path d="M8 14l5.500 6 5.500-6" stroke="#555" strokeWidth="1.200" /></svg>
  </Combo>
);
const UpArrow = () => (
  <svg width="16" height="22"><path d="M8 0l6 8h-4v7H6V8H2zM2 18h12v1.600H2z" fill="#000" /></svg>
);
const RefInput = ({ id, value }) => (
  <RefBox>
    <input id={id} defaultValue={value} />
    {value && <Caret />}
    <button aria-label="选择区域"><UpArrow /></button>
  </RefBox>
);

const ValidationDialog = () => (
  <Dialog role="dialog" aria-labelledby="dlg-title">
    <DialogTitle>
      <h2 id="dlg-title">数据验证</h2>
      <button>?</button>
      <button aria-label="关闭"><svg width="16" height="16" stroke="#111" strokeWidth="1.400"><path d="M.5.5l15 15M15.500.5l-15 15" /></svg></button>
    </DialogTitle>
    <DialogTabs>
      <DialogTab $w={92} $on>设置</DialogTab>
      <DialogTab $w={100}>输入信息</DialogTab>
      <DialogTab $w={102}>出错警告</DialogTab>
      <DialogTab $w={118}>输入法模式</DialogTab>
    </DialogTabs>
    <Panel>
      <Legend>验证条件</Legend>
      <Fields>
        <Field $w={208}>
          <label htmlFor="allow">允许(<u>A</u>):</label>
          <ComboBox id="allow" value="整数" />
          <Check>
            <Tick width="14" height="10" fill="none" stroke="#fff" strokeWidth="1.300"><path d="M2 4l4 4 6-6" /></Tick>
            <input type="checkbox" defaultChecked />
            <span>忽略空值(<u>B</u>)</span>
          </Check>
        </Field>
        <Field $w={208}>
          <label htmlFor="data">数据(<u>D</u>):</label>
          <ComboBox id="data" value="介于" />
        </Field>
        <Field $w={430}>
          <label htmlFor="min">最小值(<u>M</u>)</label>
          <RefInput id="min" />
        </Field>
        <Field $w={430}>
          <label htmlFor="max">最大值(<u>X</u>)</label>
          <RefInput id="max" value="10" />
        </Field>
      </Fields>
      <Check $mt={14}>
        <input type="checkbox" />
        <span>对有同样设置的所有其他单元格应用这些更改(<u>P</u>)</span>
      </Check>
    </Panel>
    <DialogFoot>
      <DialogButton>全部清除(<u>C</u>)</DialogButton>
      <DialogButton $primary>确定</DialogButton>
      <DialogButton>取消</DialogButton>
    </DialogFoot>
    <Marks width="300" height="360" fill="none" stroke="#fb3a3a" strokeWidth="7">
      <ellipse cx="146" cy="77" rx="132" ry="61" />
      <ellipse cx="147.500" cy="310" rx="126" ry="36" />
    </Marks>
  </Dialog>
);

export default function App() {
  return (
    <App_>
      <Global />
      <TitleBar>
        <TitleLeft>
          <svg width="24" height="24"><path d="M5 0h19v24H5z" fill="#21a366" /><path d="M15 0h9v7h-9z" fill="#33c481" /><path d="M5 12h10v6H5zM15 12h9v6h-9z" fill="#107c41" /><path d="M5 17h19v7H5z" fill="#185c37" /><rect y="5" width="15" height="15" rx="1" fill="#107c41" /><path d="M4.500 8l6 9M10.500 8l-6 9" stroke="#fff" strokeWidth="2" /></svg>
          <svg width="24" height="24" fill="#dcdcdc" stroke="#b0b0b0" strokeWidth="2"><path d="M1 1h22v22H4l-3-3z" /><path d="M5 1h14v9H5zM7 15h10v8H7z" fill="#f2f2f2" /></svg>
          <FileName>01-Excel快速入门（上）.xlsx  -  Excel</FileName>
        </TitleLeft>
        <Search>
          <svg width="22" height="24" fill="none" stroke="#bdbdbd" strokeWidth="1.500"><circle cx="14" cy="9" r="7" /><path d="M9 14l-8 8" /></svg>
          <input placeholder="搜索(Alt+Q)" aria-label="搜索" />
        </Search>
        <TitleRight>
          <Login>登录</Login>
          <svg width="26" height="26" fill="none" stroke="#333" strokeWidth="1.600"><path d="M12 5l9 8-6 5-10 6c-2 1-3-1-2-3zM10 21c3 4 8 1 6-3" /><path d="M17 1l1 4M24 1l-3 4M22 9h3" stroke="#1e90e0" /></svg>
          <WinButtons>
            <WinButton aria-label="最小化"><svg width="16" height="2"><path d="M0 1h16" stroke="#bdbdbd" strokeWidth="1.500" /></svg></WinButton>
            <WinButton aria-label="还原"><svg width="16" height="16" fill="none" stroke="#bdbdbd" strokeWidth="1.400"><rect x="1" y="4" width="11" height="11" rx="2" /><path d="M4 1h8q3 0 3 3v8" /></svg></WinButton>
            <WinButton aria-label="关闭"><svg width="16" height="16" stroke="#bdbdbd" strokeWidth="1.500"><path d="M0 0l16 16M16 0L0 16" /></svg></WinButton>
          </WinButtons>
        </TitleRight>
      </TitleBar>

      <MenuBar>
        <MenuList>{MENU.map((m) => <MenuItem key={m} $on={m === "数据"}>{m}</MenuItem>)}</MenuList>
        <Share>
          <svg width="17" height="18" fill="none" stroke="#fff" strokeWidth="1.500"><path d="M4 6H1v11h13v-4M4 12c0-5 3-7 7-7V1l5 6-5 6V9c-3 0-5 1-7 3z" /></svg>
          共享
        </Share>
      </MenuBar>

      <Ribbon>
        <Group $w={443}>
          <GroupBody $pad={13}>
            <BigButton icon="db" w={68} a="获取数" b="据" drop />
            <BigButton icon="csv" w={68} a="从文" b="本/CSV" />
            <BigButton icon="web" w={68} a="自" b="网站" />
            <BigButton icon="table" w={68} a="来自表" b="格/区域" />
            <BigButton icon="recent" w={68} a="最近使" b="用的源" />
            <Rule $h={63} $m={6} />
            <BigButton icon="existing" w={68} a="现有" b="连接" />
          </GroupBody>
          <GroupName>获取和转换数据</GroupName>
        </Group>
        <Group $w={245}>
          <GroupBody $pad={11}>
            <BigButton icon="refresh" w={80} a="全部刷新" drop />
            <SmallList $pad={9}>
              <SmallButton icon="queries" mt={-3}>查询和连接</SmallButton>
              <SmallButton icon="props">属性</SmallButton>
              <SmallButton icon="links">编辑链接</SmallButton>
            </SmallList>
          </GroupBody>
          <GroupName>查询和连接</GroupName>
        </Group>
        <Group $w={330}>
          <GroupBody $pad={17} $gap={12}>
            <SortList>{icons.az}{icons.za}</SortList>
            <BigButton icon="sort" w={56} a="排序" />
            <Rule $h={94} />
            <BigButton icon="filter" w={56} a="筛选" />
            <SmallList>
              <SmallButton icon="clear" mt={-3}>清除</SmallButton>
              <SmallButton icon="reapply">重新应用</SmallButton>
              <SmallButton icon="advanced">高级</SmallButton>
            </SmallList>
          </GroupBody>
          <GroupName>排序和筛选</GroupName>
        </Group>
        <Group $w={510}>
          <GroupBody $pad={5}>
            <BigButton icon="split" w={74} a="分列" />
            <BigButton icon="flash" w={74} a="快速填充" />
            <BigButton icon="dedupe" w={74} a="删除" b="重复值" />
            <BigButton icon="validate" w={56} a="数据验" b="证" drop />
            <BigButton icon="merge" w={90} a="合并计算" />
            <BigButton icon="relate" w={58} a="关系" />
            <BigButton icon="model" w={72} a="管理数" b="据模型" />
          </GroupBody>
          <GroupName>数据工具</GroupName>
        </Group>
        <Group $w={168}>
          <GroupBody $pad={9}>
            <BigButton icon="whatif" w={84} a="模拟分析" drop />
            <BigButton icon="forecast" w={62} a="预测" b="工作表" />
          </GroupBody>
          <GroupName>预测</GroupName>
        </Group>
        <Group $w={410}>
          <GroupBody $pad={11}>
            <BigButton icon="group" w={64} a="组合" drop />
            <BigButton icon="ungroup" w={82} a="取消组合" drop />
            <BigButton icon="subtotal" w={82} a="分类汇总" />
            <SmallList $pad={9}>
              <SmallButton icon="show" mt={-3}>显示明细数据</SmallButton>
              <SmallButton icon="hide">隐藏明细数据</SmallButton>
            </SmallList>
          </GroupBody>
          <GroupName $end={24}>分级显示</GroupName>
          <Launcher aria-label="分级显示设置"><svg width="13" height="13" {...N}><path d="M1 11V1h11M5 5l6 6M12 5v7H5" /></svg></Launcher>
        </Group>
        <Collapse aria-label="折叠功能区"><Chev w={16} c="#333" sw={1.2} /></Collapse>
      </Ribbon>

      <FormulaBar>
        <BarBox $w={150}><input defaultValue="B32" aria-label="名称框" /><Chev w={16} c="#444" sw={1.2} /></BarBox>
        <Dots><svg width="4" height="16" fill="#8a8a8a"><path d="M0 0h3v3H0zM0 6h3v3H0zM0 12h3v3H0z" /></svg></Dots>
        <FxBox $w={109}>
          <svg width="19" height="19" stroke="#b5b5b5" strokeWidth="1.500"><path d="M1 1l17 17M18 1L1 18" /></svg>
          <svg width="24" height="17" fill="none" stroke="#b5b5b5" strokeWidth="1.500"><path d="M1 9l7 7L23 1" /></svg>
          <Fx>fx</Fx>
        </FxBox>
        <FormulaInput><input defaultValue="13" aria-label="编辑栏" /><Chev w={14} c="#8a8a8a" sw={1.2} /></FormulaInput>
      </FormulaBar>

      <SheetArea>
        <SheetView><Sheet /></SheetView>
        <VScroll>
          <svg width="14" height="11"><path d="M7 0q1 0 2 1l5 8q0 2-2 2H2q-2 0-2-2l5-8q1-1 2-1" fill="#707070" /></svg>
          <VGap />
          <VThumb />
          <svg width="14" height="11"><path d="M7 11q1 0 2-1l5-8q0-2-2-2H2Q0 0 0 2l5 8q1 1 2 1" fill="#707070" /></svg>
        </VScroll>
      </SheetArea>

      <TabBar>
        <TabNav>
          <svg width="6" height="12"><path d="M6 0v12L0 6z" fill="#c0c0c0" /></svg>
          <svg width="6" height="12"><path d="M0 0v12l6-6z" fill="#0f703b" /></svg>
        </TabNav>
        <Tabs>
          {TABS.map((t, i) => <Tab key={t} $on={i === 5} $red={i === 7} $cut={i === 11}>{t}</Tab>)}
          <TabMore>...</TabMore>
        </Tabs>
        <AddTab aria-label="新工作表"><svg width="22" height="22" fill="none" stroke="#777" strokeWidth="1.500"><circle cx="11" cy="11" r="10" /><path d="M11 6v10M6 11h10" /></svg></AddTab>
        <HZone>
          <Dots><svg width="4" height="16" fill="#a8a8a8"><path d="M0 0h3v3H0zM0 6h3v3H0zM0 12h3v3H0z" /></svg></Dots>
          <HScroll>
            <svg width="10" height="14"><path d="M10 1v12q-1 2-3 0L0 8V6l7-5q2-2 3 0" fill="#707070" /></svg>
            <HThumb />
            <svg width="10" height="14"><path d="M0 1v12q1 2 3 0l7-5V6L3 1Q1-1 0 1" fill="#707070" /></svg>
          </HScroll>
        </HZone>
      </TabBar>

      <StatusBar>
        <span>输入</span>
        <Access>
          <svg width="20" height="22" fill="none" stroke="#444" strokeWidth="1.600"><circle cx="9" cy="3.500" r="2.500" /><path d="M1 5c1 3 4 3 5 4v4l-4 7M17 5c-1 3-4 3-5 4v3M6 9h6M9 13l2-1M12 14l7 7M19 14l-7 7" /></svg>
          辅助功能: 调查
        </Access>
        <Views>
          <svg width="21" height="20" fill="none" stroke="#b5b5b5" strokeWidth="1.500"><path d="M1 1h19v18H1zM1 7h19M1 13h19M7.500 1v18M13.500 1v18" /></svg>
          <svg width="22" height="20" fill="none" stroke="#b5b5b5" strokeWidth="1.500"><path d="M1 1h20v18H1zM6 4h10v12H6zM8.500 7.500h5M8.500 10h5M8.500 12.500h5" /></svg>
          <svg width="22" height="20" fill="none" stroke="#b5b5b5" strokeWidth="1.500"><path d="M1 1h20v18H1zM1 12h13V1M7.500 1v11" /></svg>
          <svg width="13" height="2"><path d="M0 1h13" stroke="#b5b5b5" strokeWidth="1.500" /></svg>
        </Views>
      </StatusBar>

      <Ime>
        <ImeKey $w={47} aria-label="iFLY">
          <svg width="34" height="34" viewBox="0 0 34 34"><circle cx="17" cy="17" r="14.500" fill="none" stroke="#4f7bff" strokeWidth="3" /><text x="17" y="21" textAnchor="middle" fontFamily="Inter, sans-serif" fontWeight="900" fontSize="10" fill="#4f7bff">iFLY</text></svg>
        </ImeKey>
        <ImeKey $w={47}>英</ImeKey>
        <ImeKey $w={34} aria-label="标点"><svg width="20" height="24" fill="#4f7bff"><circle cx="5" cy="6" r="5" /><path d="M11 15a4.500 4.500 0 1 1 9 0c0 5-3 8-7 9 2-2 3-3 3-5-3 0-5-2-5-4" /></svg></ImeKey>
        <ImeKey $w={42} aria-label="语音"><svg width="20" height="24" fill="#4f7bff"><rect x="5" y="0" width="10" height="16" rx="5" /><path d="M1.500 11c0 11 17 11 17 0M10 19v5" fill="none" stroke="#4f7bff" strokeWidth="2" /></svg></ImeKey>
        <ImeKey $w={40} $on aria-label="用户"><svg width="22" height="24" fill="#4f7bff"><circle cx="11" cy="6" r="6" /><path d="M0 24c0-13 22-13 22 0z" /></svg></ImeKey>
        <ImeKey $w={40} aria-label="工具"><svg width="23" height="23" fill="#4f7bff"><path d="M0 1h10v10H0zM0 13h10v10H0zM12 13h10v10H12zM17.500 0L23 5.500 17.500 11 12 5.500z" /></svg></ImeKey>
        <Watermark>CSDN @Mr_suyi</Watermark>
      </Ime>

      <Gauge />
      <ValidationDialog />
    </App_>
  );
}
